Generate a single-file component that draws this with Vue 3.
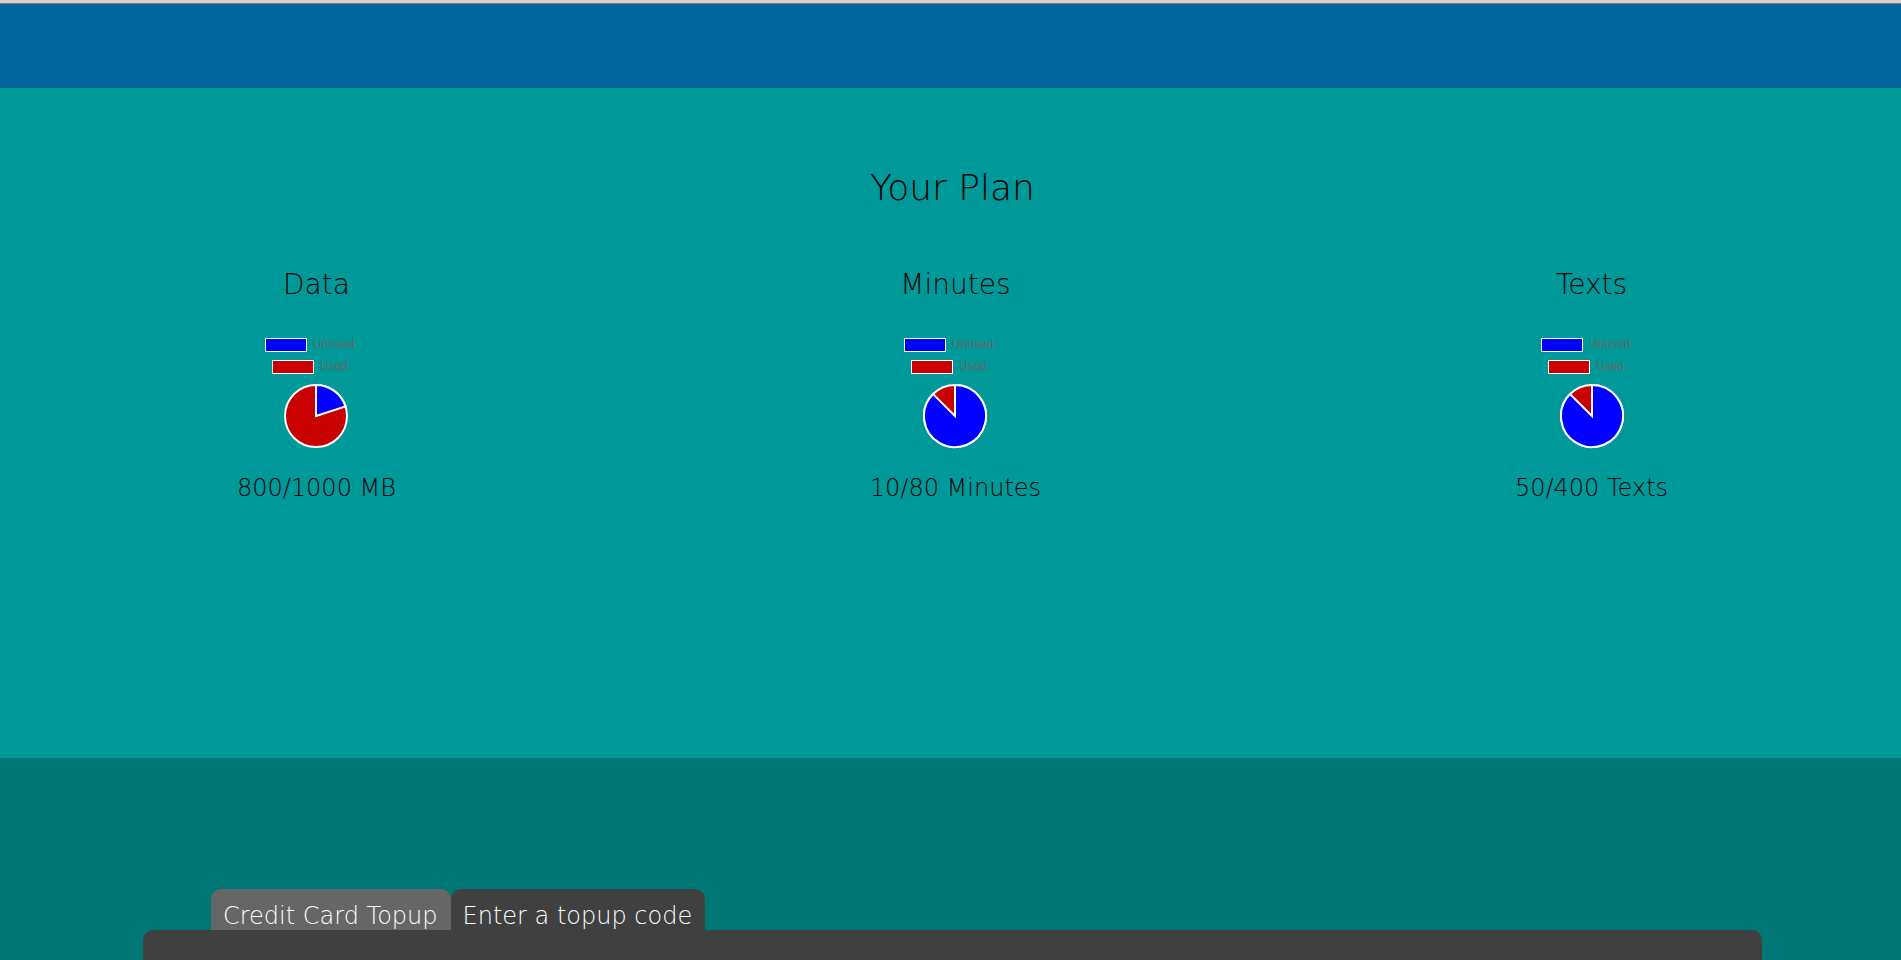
<script setup>
const plans = [
  { title: 'Data', used: 800, total: 1000, unit: 'MB' },
  { title: 'Minutes', used: 10, total: 80, unit: 'Minutes' },
  { title: 'Texts', used: 50, total: 400, unit: 'Texts' },
]

const cx = 60
const cy = 86
const r = 31

// Slice running clockwise from twelve o'clock, for the unused share of the plan.
function unusedSlice(plan) {
  const share = (plan.total - plan.used) / plan.total
  const angle = share * 2 * Math.PI
  const x = cx + r * Math.sin(angle)
  const y = cy - r * Math.cos(angle)
  return `M${cx} ${cy}V${cy - r}A${r} ${r} 0 ${share > 0.5 ? 1 : 0} 1 ${x} ${y}Z`
}
</script>

<template>
  <div class="page">
    <header class="topbar"></header>
    <main>
      <section class="plan">
        <div class="plan-body">
          <h1>Your Plan</h1>
          <div class="meters">
            <article v-for="plan in plans" :key="plan.title" class="meter">
              <h2>{{ plan.title }}</h2>
              <svg class="chart" width="120" height="120" viewBox="0 0 120 120" role="img" :aria-label="plan.title">
                <rect class="unused" x="9.5" y="8.5" width="41" height="13" />
                <text x="57" y="18">Unused</text>
                <rect class="used" x="16.5" y="30.5" width="41" height="13" />
                <text x="64" y="40">Used</text>
                <circle class="used slice" :cx="cx" :cy="cy" :r="r" />
                <path class="unused slice" :d="unusedSlice(plan)" />
              </svg>
              <p>{{ plan.used }}/{{ plan.total }} {{ plan.unit }}</p>
            </article>
          </div>
        </div>
      </section>
      <section class="topup">
        <div class="tabs" role="tablist">
          <button type="button" role="tab" class="tab" aria-selected="false">Credit Card Topup</button>
          <button type="button" role="tab" class="tab active" aria-selected="true">Enter a topup code</button>
        </div>
        <div class="panel" role="tabpanel"></div>
      </section>
    </main>
  </div>
</template>

<style>
body {
  margin: 0;
}
</style>

<style scoped>
.page {
  display: flex;
  flex-direction: column;
  min-height: 100vh;
  font-family: "DejaVu Sans Light", "DejaVu Sans", sans-serif;
  font-weight: 200;
  color: #000;
  background: #007777;
}
.topbar {
  box-sizing: border-box;
  height: 88px;
  border-top: 3px solid #d6d2d0;
  background: #006699;
  box-shadow: inset 0 1px #7b7b78;
}
main {
  display: flex;
  flex: 1;
  flex-direction: column;
}
.plan {
  box-sizing: border-box;
  min-height: 670px;
  padding-top: 79px;
  overflow: hidden;
  background: #009999;
}
.plan-body {
  margin-right: -4px;
}
h1,
h2,
p {
  margin: 0;
  font-weight: 200;
  text-align: center;
}
h1 {
  font-size: 36px;
  line-height: 42px;
}
.meters {
  display: flex;
  justify-content: space-around;
  margin-top: 60px;
}
.meter {
  display: flex;
  flex-direction: column;
  align-items: center;
}
h2 {
  font-size: 28px;
  line-height: 32px;
}
.chart {
  margin-top: 29px;
}
.meter p {
  margin-top: 24px;
  font-size: 24px;
  line-height: 28px;
}
.chart text {
  font: 12px "Liberation Sans", Arial, sans-serif;
  fill: #666;
}
.chart rect {
  stroke: #fff;
  stroke-width: 1px;
}
.unused {
  fill: #0000ff;
}
.used {
  fill: #c80000;
}
.slice {
  stroke: #fff;
  stroke-width: 2px;
}
.topup {
  display: flex;
  flex: 1;
  flex-direction: column;
  padding: 131px 139px 0 143px;
}
.tabs {
  display: flex;
  padding-left: 68px;
}
.tab {
  padding: 13px 13px 0 12px;
  border: 0;
  border-radius: 10px 10px 0 0;
  background: #666;
  color: #fff;
  font: inherit;
  font-size: 24px;
  line-height: 28px;
}
.tab.active {
  background: #404040;
}
.panel {
  flex: 1;
  min-height: 30px;
  border-radius: 10px 10px 0 0;
  background: #404040;
}
</style>
